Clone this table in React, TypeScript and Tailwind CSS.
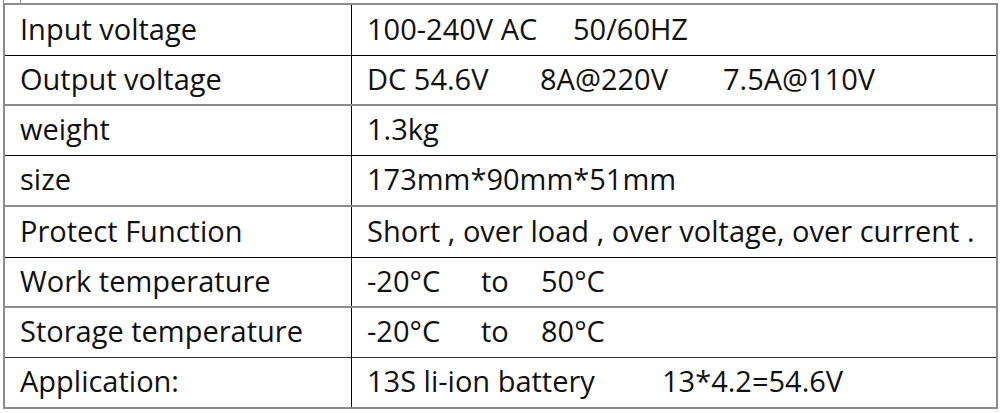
import React from 'react';

type Row = {
  label: string;
  parts: { text: string; w?: string }[];
  h: string;
  line: string;
};

const rows: Row[] = [
  {
    label: 'Input voltage',
    parts: [{ text: '100-240V AC', w: 'w-[206px]' }, { text: '50/60HZ' }],
    h: 'h-[51px]',
    line: 'border-b border-black',
  },
  {
    label: 'Output voltage',
    parts: [
      { text: 'DC 54.6V', w: 'w-[173px]' },
      { text: '8A@220V', w: 'w-[183px]' },
      { text: '7.5A@110V' },
    ],
    h: 'h-[50px]',
    line: 'border-b-2 border-[#8c8c8c]',
  },
  {
    label: 'weight',
    parts: [{ text: '1.3kg' }],
    h: 'h-[50px]',
    line: 'border-b border-black',
  },
  {
    label: 'size',
    parts: [{ text: '173mm*90mm*51mm' }],
    h: 'h-[51px]',
    line: 'border-b-2 border-[#8c8c8c]',
  },
  {
    label: 'Protect Function',
    parts: [{ text: 'Short , over load , over voltage, over current .' }],
    h: 'h-[51px]',
    line: 'border-b border-black',
  },
  {
    label: 'Work temperature',
    parts: [
      { text: '-20°C', w: 'w-[114px]' },
      { text: 'to', w: 'w-[60px]' },
      { text: '50°C' },
    ],
    h: 'h-[50px]',
    line: 'border-b-2 border-[#8c8c8c]',
  },
  {
    label: 'Storage temperature',
    parts: [
      { text: '-20°C', w: 'w-[114px]' },
      { text: 'to', w: 'w-[60px]' },
      { text: '80°C' },
    ],
    h: 'h-[50px]',
    line: 'border-b border-[#333]',
  },
  {
    label: 'Application:',
    parts: [{ text: '13S li-ion battery', w: 'w-[295px]' }, { text: '13*4.2=54.6V' }],
    h: 'h-[49px]',
    line: '',
  },
];

export default function App() {
  return (
    <div className="w-[1000px] h-[413px] bg-white text-[#111] font-['Open_Sans',sans-serif] text-[29px] leading-none">
      <div className="ml-[3px] w-[18px] h-[3px] border-x border-[#8c8c8c]" />
      <div className="ml-[3px] w-[995px] border-2 border-[#8c8c8c] flex flex-col">
        {rows.map((r) => (
          <div key={r.label} className={`flex ${r.h} ${r.line}`}>
            <div className="w-[347px] shrink-0 border-r border-black flex items-center pl-[15px] pb-[4px]">
              {r.label}
            </div>
            <div className="flex-1 flex items-center pl-[15px] pb-[4px] whitespace-pre">
              {r.parts.map((p, i) => (
                <span key={i} className={`inline-block ${p.w ?? ''}`}>
                  {p.text}
                </span>
              ))}
            </div>
          </div>
        ))}
      </div>
    </div>
  );
}
